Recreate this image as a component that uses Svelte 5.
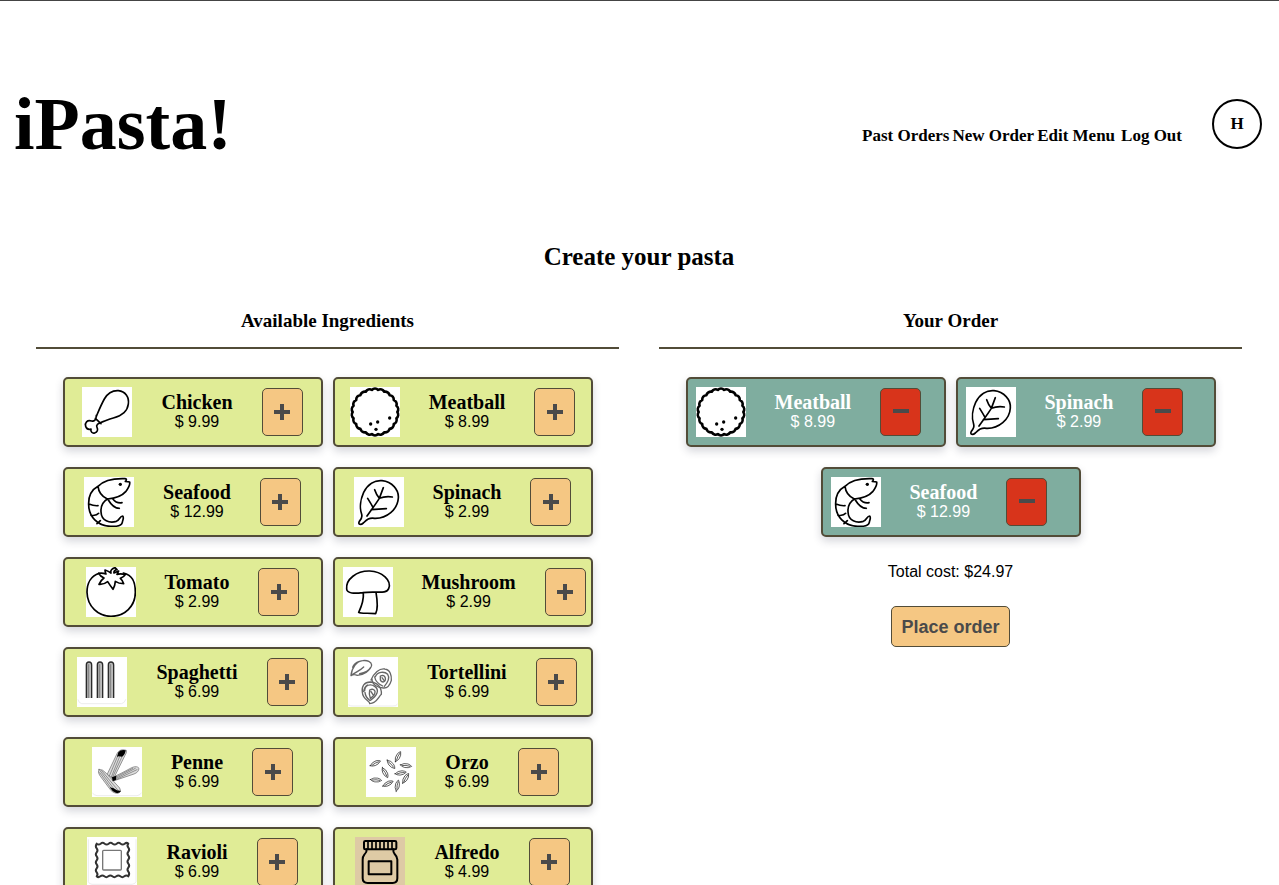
<script>
  const available = [
    { name: 'Chicken', price: '9.99' },
    { name: 'Meatball', price: '8.99' },
    { name: 'Seafood', price: '12.99' },
    { name: 'Spinach', price: '2.99' },
    { name: 'Tomato', price: '2.99' },
    { name: 'Mushroom', price: '2.99' },
    { name: 'Spaghetti', price: '6.99' },
    { name: 'Tortellini', price: '6.99' },
    { name: 'Penne', price: '6.99' },
    { name: 'Orzo', price: '6.99' },
    { name: 'Ravioli', price: '6.99' },
    { name: 'Alfredo', price: '4.99' }
  ];

  let order = $state([available[1], available[3], available[2]]);
  let total = $derived(order.reduce((sum, item) => sum + Number(item.price), 0).toFixed(2));

  const add = (item) => order.push(item);
  const remove = (index) => order.splice(index, 1);

  // Scalloped outline of the meatball: small arcs between points on a circle.
  const scallops = Array.from({ length: 22 }, (_, i) => {
    const a = (i / 22) * Math.PI * 2;
    const x = (75 + 67 * Math.cos(a)).toFixed(1);
    const y = (75 + 67 * Math.sin(a)).toFixed(1);
    return i === 0 ? `M${x} ${y}` : `A14 14 0 0 1 ${x} ${y}`;
  }).join(' ') + ' A14 14 0 0 1 142 75Z';

  // Orzo grains: centre and angle of each.
  const grains = [
    [96, 29, -62], [28, 49, -25], [75, 52, 48], [120, 56, 8], [57, 77, 62],
    [104, 78, -8], [119, 94, -58], [30, 99, 5], [66, 110, -25], [94, 116, -78]
  ];
</script>

{#snippet picture(name)}
  <svg class="picture" class:tan={name === 'Alfredo'} viewBox="0 0 150 150" aria-hidden="true">
    {#if name === 'Chicken'}
      <path d="M43 88C49 74 57 54 67 36C78 17 91 10 109 11C130 13 142 30 139 51C136 76 113 88 94 93C80 97 67 103 55 107M43 85L42 93C40 99 36 104 29 102C15 98 8 107 11 118C14 126 21 128 27 126C25 134 31 140 38 138C46 136 49 128 45 121C41 114 49 108 56 109M40 94L57 110" />
    {:else if name === 'Meatball'}
      <path d={scallops} stroke-width="8" />
      <g class="solid"><circle cx="62" cy="111" r="5" /><circle cx="83" cy="105" r="5" /><circle cx="119" cy="93" r="5" /><circle cx="78" cy="127" r="5" /></g>
    {:else if name === 'Seafood'}
      <path d="M42 28C62 7 94 4 123 5C129 6 128 9 124 13L137 15C139 25 133 34 125 44C113 58 95 64 70 66C57 60 44 46 42 28C20 40 13 62 14 84C15 119 40 147 80 148C101 149 113 147 115 136C116 128 121 123 116 117C107 117 108 129 97 133C77 139 52 132 51 104C50 86 57 74 70 66M73 69C80 81 91 94 106 94M86 65C93 74 104 79 114 77M15 81Q29 87 42 86M21 115Q38 117 44 109M39 140Q43 137 49 131" />
      <circle class="solid" cx="109" cy="22" r="5" />
    {:else if name === 'Spinach'}
      <path d="M23 112C16 92 20 65 29 46C41 22 62 9 84 11C114 14 135 38 133 63C131 98 98 125 62 124C46 121 38 128 28 138C20 145 11 143 16 133Q26 122 23 112ZM39 117C50 101 64 83 76 64L88 32M76 64C91 58 102 58 115 60M76 64Q67 53 62 38M57 91Q51 80 41 64M52 98Q74 97 97 95" />
    {:else if name === 'Tomato'}
      <path d="M39 19C16 26 3 48 3 76C4 119 37 148 75 148C116 148 148 118 148 76C148 43 139 25 112 18" />
      <path d="M75 18C72 9 80 4 87 2L93 8C86 9 83 13 84 18Q91 15 98 12Q95 19 93 22Q105 19 118 23Q113 31 103 34Q111 41 113 50Q98 50 88 43Q87 57 81 67Q72 55 65 44Q54 53 39 52Q44 40 54 33Q43 28 38 19Q49 17 60 21Q57 15 57 9Q68 13 75 18Z" />
    {:else if name === 'Mushroom'}
      <path d="M11 66C8 37 41 11 80 12C117 13 147 41 137 65C130 83 97 71 59 77C35 80 12 80 11 66ZM61 78C63 103 55 119 47 136C53 141 78 137 98 140C106 124 103 99 99 76" />
    {:else if name === 'Spaghetti'}
      <path class="edge" d="M3 128Q5 138 14 140H134Q143 138 146 128" />
      <path class="straw" d="M28 123V24Q28 15 36 15Q44 15 44 24V123M61 123V24Q61 15 69 15Q77 15 77 24V123M94 123V24Q94 15 102 15Q110 15 110 24V123" />
      <path class="shade" d="M34 22V123M67 22V123M100 22V123" />
    {:else if name === 'Tortellini'}
      <g class="pencil">
        <path d="M9 56C11 32 26 13 44 11C58 9 70 14 71 24C68 42 44 55 28 55Q17 50 9 56ZM13 53C29 42 38 39 47 30M14 31C17 22 24 16 34 13M35 50Q61 45 68 31" />
        <path d="M69 69C78 48 94 33 111 36C127 38 131 57 130 70C126 84 119 94 106 93C88 92 72 83 72 66M82 59C88 44 109 42 119 52C126 62 119 76 109 88M80 60Q83 77 104 87M97 57Q109 52 112 63Q114 73 105 75Q96 74 97 65ZM102 62L108 70" />
        <path d="M43 106C40 87 49 75 67 75C88 76 102 92 100 112C91 120 86 139 65 140C67 130 44 130 43 106ZM50 101C51 84 67 79 80 88C96 99 87 117 67 130M51 106Q52 120 65 130M65 99Q77 93 81 103Q82 114 67 124Q62 112 65 99ZM69 104L75 113M58 84Q49 90 47 104" />
      </g>
      <path class="edge" d="M2 144Q8 148 15 147H135Q145 148 148 142" />
    {:else if name === 'Penne'}
      <g class="tube">
        <path d="M46 81L76 18Q85 4 103 10Q105 17 99 25L65 94Z" />
        <path d="M60 92Q85 81 119 62Q135 55 141 64Q140 76 126 81L67 101Z" />
        <path d="M21 67Q32 66 43 79L83 123Q90 133 79 139Q62 140 52 124L23 85Q16 75 21 67Z" />
        <path d="M81 18L52 87M88 16L58 90M95 18L61 92M122 64L63 95M130 64L65 98M135 68L67 100M24 71L72 134M29 71L78 130M23 77L64 133" />
      </g>
      <path class="solid" d="M79 16Q86 7 101 10Q100 23 90 29Q80 26 75 29ZM53 121Q66 123 75 130L87 132Q82 141 71 137Q61 134 53 121ZM60 91L73 86L72 98L62 103Z" />
      <path class="edge" d="M2 139Q7 145 15 146H135Q145 145 148 138" />
    {:else if name === 'Orzo'}
      {#each grains as [x, y, angle]}
        <path class="grain" transform={`translate(${x} ${y}) rotate(${angle})`} d="M-17 0Q-7 -8 5 -6Q14 -4 17 0Q8 7 -3 6Q-12 5 -17 0ZM-11 1Q0 -2 11 0" />
      {/each}
    {:else if name === 'Ravioli'}
      <path d="M29 20q6 5 12 0t12 0t12 0t12 0t12 0t12 0t12 0t11 0q-5 6 0 12t0 12t0 12t0 12t0 12t0 12t0 12t0 14q-6-5-12 0t-12 0t-12 0t-12 0t-12 0t-12 0t-12 0t-11 0q5-6 0-12t0-12t0-12t0-12t0-12t0-12t0-12t0-14Z" stroke="#333" stroke-width="6" />
      <rect x="47" y="40" width="56" height="59" rx="3" stroke="#777" stroke-width="4" />
      <path class="edge" d="M4 8V134Q6 141 15 142H135Q145 141 147 134V8" />
    {:else if name === 'Alfredo'}
      <path d="M35 37Q36 45 28 53Q23 59 23 68V124Q23 138 38 138H113Q127 138 127 124V68Q126 58 119 51Q114 45 115 37M41 73H109V112H41Z" stroke-width="6" />
      <rect x="27" y="12" width="97" height="25" rx="4" stroke-width="6" />
      <path d="M39 13V36M51 13V36M63 13V36M75 13V36M87 13V36M99 13V36M111 13V36" />
    {/if}
  </svg>
{/snippet}

<div class="page">
  <header>
    <h1>iPasta!</h1>
    <nav>
      <a href="#past">Past Orders</a>
      <a href="#new">New Order</a>
      <a href="#edit">Edit Menu</a>
      <a class="logout" href="#logout">Log Out</a>
    </nav>
    <div class="avatar">H</div>
  </header>

  <main>
    <h2>Create your pasta</h2>
    <div class="columns">
      <section>
        <h3>Available Ingredients</h3>
        <div class="cards">
          {#each available as item}
            <article class="card">
              {@render picture(item.name)}
              <div class="label">
                <h4>{item.name}</h4>
                <p>$ {item.price}</p>
              </div>
              <button class="square" aria-label={`Add ${item.name}`} onclick={() => add(item)}>
                <svg viewBox="0 0 16 16" aria-hidden="true"><path d="M8 0V16M0 8H16" /></svg>
              </button>
            </article>
          {/each}
        </div>
      </section>

      <section>
        <h3>Your Order</h3>
        <div class="cards">
          {#each order as item, i}
            <article class="card chosen">
              {@render picture(item.name)}
              <div class="label">
                <h4>{item.name}</h4>
                <p>$ {item.price}</p>
              </div>
              <button class="square" aria-label={`Remove ${item.name}`} onclick={() => remove(i)}>
                <svg viewBox="0 0 16 16" aria-hidden="true"><path d="M0 7H16" /></svg>
              </button>
            </article>
          {/each}
        </div>
        <p class="total">Total cost: ${total}</p>
        <button class="place">Place order</button>
      </section>
    </div>
  </main>
</div>

<style>
  :global(body) {
    background: #fff;
    scrollbar-width: none;
  }
  .page {
    box-sizing: border-box;
    border-top: 1px solid #444;
    font: 16px/20px "Liberation Sans", Arial, sans-serif;
    color: #000;
  }
  h1, h2, h3, h4, p {
    margin: 0;
  }
  h1, h2, h3, h4, nav, .avatar {
    font-family: "Liberation Serif", "Times New Roman", serif;
    font-weight: 700;
  }
  header {
    display: flex;
    align-items: center;
    padding: 72px 17px 72px 14px;
  }
  h1 {
    font-size: 74px;
    line-height: 102px;
  }
  nav {
    display: flex;
    gap: 3px;
    margin: 24px 30px 0 auto;
    font-size: 17px;
  }
  nav a {
    color: inherit;
    text-decoration: none;
  }
  .logout {
    margin-left: 3px;
  }
  .avatar {
    box-sizing: border-box;
    display: grid;
    place-items: center;
    width: 50px;
    height: 50px;
    border: 2px solid #000;
    border-radius: 50%;
    font-size: 17px;
  }
  main {
    padding: 0 37px 40px 36px;
    text-align: center;
  }
  h2 {
    font-size: 25px;
    line-height: 20px;
  }
  .columns {
    display: grid;
    grid-template-columns: 1fr 1fr;
    gap: 40px;
    margin-top: 40px;
  }
  h3 {
    padding: 4px 0 16px;
    border-bottom: 2px solid #524c38;
    font-size: 19px;
    line-height: 20px;
  }
  .cards {
    display: flex;
    flex-wrap: wrap;
    justify-content: center;
    gap: 20px 10px;
    margin-top: 28px;
  }
  .card {
    box-sizing: border-box;
    display: flex;
    align-items: center;
    justify-content: safe center;
    gap: 29px;
    width: 260px;
    height: 70px;
    padding: 0 8px;
    border: 2px solid #524c38;
    border-radius: 5px;
    background: #e0ec96;
    box-shadow: 0 4px 8px rgba(40, 45, 70, 0.2);
  }
  .chosen {
    justify-content: flex-start;
    background: #7fad9f;
    color: #fff;
  }
  h4 {
    font-size: 20px;
    line-height: 20px;
  }
  .label p {
    line-height: 20px;
  }
  .picture {
    flex: none;
    width: 50px;
    height: 50px;
    background: #fff;
    fill: none;
    stroke: #000;
    stroke-width: 5;
    stroke-linecap: round;
    stroke-linejoin: round;
  }
  .tan {
    background: #decaa5;
  }
  .solid {
    fill: #000;
    stroke: none;
  }
  .edge {
    stroke: #e2e2e2;
    stroke-width: 2;
  }
  .straw {
    fill: #bbb;
    stroke: #2a2a2a;
    stroke-width: 4;
    stroke-linecap: butt;
  }
  .shade {
    stroke: #888;
    stroke-width: 5;
    stroke-linecap: butt;
  }
  .pencil {
    stroke: #666;
    stroke-width: 4;
  }
  .tube {
    fill: #ddd;
    stroke: #666;
    stroke-width: 2;
  }
  .grain {
    stroke: #222;
    stroke-width: 2;
  }
  button {
    box-sizing: border-box;
    border: 1px solid #524c38;
    border-radius: 5px;
    background: #f5c783;
    color: #4a4a4a;
    cursor: pointer;
  }
  .square {
    display: grid;
    flex: none;
    place-items: center;
    width: 41px;
    height: 48px;
    padding: 0;
  }
  .square svg {
    width: 16px;
    height: 16px;
    stroke: #4a4a4a;
    stroke-width: 4;
  }
  .chosen .square {
    background: #d8341b;
  }
  .total {
    margin-top: 25px;
  }
  .place {
    height: 41px;
    margin-top: 24px;
    padding: 0 9px;
    font: 700 18px/20px "Liberation Sans", Arial, sans-serif;
  }
</style>
